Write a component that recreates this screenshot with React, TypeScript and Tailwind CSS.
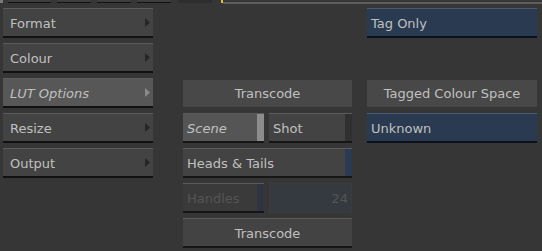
import { ReactNode } from 'react'

const font = { fontFamily: '"DejaVu Sans", "Liberation Sans", sans-serif' }

function Arrow({ light }: { light?: boolean }) {
  return (
    <svg width="5" height="9" viewBox="0 0 5 9" className="shrink-0">
      <path d="M0 0 L5 4.5 L0 9 Z" fill={light ? '#8a8a8a' : '#262626'} />
    </svg>
  )
}

function MenuButton({ label, active }: { label: string; active?: boolean }) {
  return (
    <div className="h-[30px] flex flex-col">
      <div
        className={`flex-1 flex items-center justify-between pl-[7px] pr-[3px] border-t border-[#5c5c5c] ${
          active ? 'bg-[#575757] italic' : 'bg-[#434343]'
        }`}
      >
        <span className="text-[13px] text-[#c0c0c0] pt-[2px]">{label}</span>
        <Arrow light={active} />
      </div>
      <div className="h-[2px] bg-[#111]" />
    </div>
  )
}

function Header({ children }: { children: ReactNode }) {
  return (
    <div className="h-[27px] bg-[#484848] flex items-center justify-center pt-[1px] text-[13px] text-[#c0c0c0]">
      {children}
    </div>
  )
}

function Btn({
  children,
  bg = 'bg-[#434343]',
  stripe,
  className = '',
  text = 'text-[#c0c0c0]',
}: {
  children: ReactNode
  bg?: string
  stripe?: string
  className?: string
  text?: string
}) {
  return (
    <div className={`h-[30px] flex flex-col ${className}`}>
      <div className={`flex-1 flex border-t border-[#5c5c5c] ${bg}`}>
        <div className={`flex-1 flex items-center pl-[4px] pt-[2px] text-[13px] ${text}`}>{children}</div>
        {stripe && <div className={`w-[7px] ${stripe}`} />}
      </div>
      <div className="h-[2px] bg-[#161616]" />
    </div>
  )
}

function BlueField({ label }: { label: string }) {
  return (
    <div className="h-[30px] flex flex-col">
      <div className="flex-1 flex items-center pl-[4px] pt-[2px] bg-[#293a51] border-t border-[#4a5a70] text-[13px] text-[#c0c0c0]">
        {label}
      </div>
      <div className="h-[2px] bg-[#0c0f1c]" />
    </div>
  )
}

export default function App() {
  return (
    <div className="w-[542px] h-[251px] bg-[#363636] overflow-hidden" style={font}>
      {/* top strip */}
      <div className="h-[4px] flex items-start">
        <div className="w-[3px] h-[3px] bg-[#7a7a7a]" />
        <div className="ml-[5px] w-[43px] h-[3px] bg-[#3d3d3d] border-b border-[#111]" />
        <div className="ml-[6px] w-[34px] h-[3px] bg-[#3d3d3d] border-b border-[#111]" />
        <div className="ml-[6px] w-[34px] h-[3px] bg-[#3d3d3d] border-b border-[#111]" />
        <div className="ml-[6px] w-[34px] h-[3px] bg-[#3d3d3d] border-b border-[#111]" />
        <div className="ml-[7px] w-[34px] h-[3px] bg-[#2e2e2e]" />
        <div className="ml-[9px] w-[2px] h-[3px] bg-[#e0c040]" />
        <div className="flex-1 mt-[2px] h-[2px] bg-[#5e5e5e]" />
      </div>

      <div className="flex pt-[4px]">
        {/* left menu */}
        <div className="ml-[3px] w-[150px] flex flex-col gap-[5px]">
          <MenuButton label="Format" />
          <MenuButton label="Colour" />
          <MenuButton label="LUT Options" active />
          <MenuButton label="Resize" />
          <MenuButton label="Output" />
        </div>

        {/* middle column */}
        <div className="ml-[30px] w-[169px] flex flex-col pt-[72px] gap-[5px]">
          <Header>Transcode</Header>
          <div className="flex gap-[5px] mt-[1px]">
            <Btn className="w-[81px]" bg="bg-[#555]" stripe="bg-[#8c8c8c]">
              <span className="italic">Scene</span>
            </Btn>
            <Btn className="flex-1" stripe="bg-[#303030]">
              Shot
            </Btn>
          </div>
          <Btn stripe="bg-[#2b3a52]">Heads &amp; Tails</Btn>
          <div className="flex gap-[5px]">
            <Btn className="w-[81px]" bg="bg-[#3a3a3a]" stripe="bg-[#2e3440]" text="text-[#555]">
              Handles
            </Btn>
            <div className="flex-1 h-[30px] bg-[#353a40] border border-[#3c3c3c] flex items-center justify-end pr-[3px] pt-[2px] text-[13px] text-[#555]">
              24
            </div>
          </div>
          <div className="h-[30px] flex flex-col">
            <div className="flex-1 flex items-center justify-center pt-[2px] bg-[#434343] border-t border-[#5c5c5c] text-[13px] text-[#c0c0c0]">
              Transcode
            </div>
            <div className="h-[2px] bg-[#161616]" />
          </div>
        </div>

        {/* right column */}
        <div className="ml-[15px] w-[170px] flex flex-col">
          <BlueField label="Tag Only" />
          <div className="mt-[42px]">
            <Header>Tagged Colour Space</Header>
          </div>
          <div className="mt-[6px]">
            <BlueField label="Unknown" />
          </div>
        </div>
      </div>
    </div>
  )
}
